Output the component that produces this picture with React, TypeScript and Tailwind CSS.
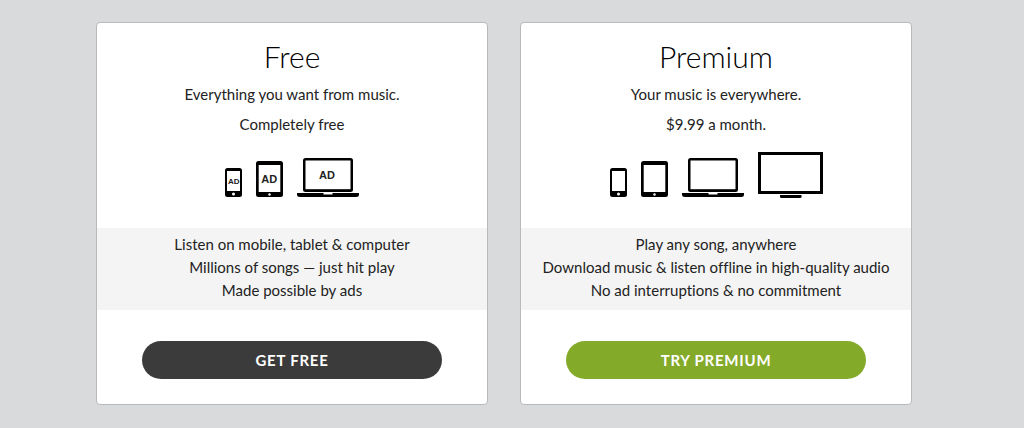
import type { ReactNode } from 'react';

function AdLabel({ x, y, size }: { x: number; y: number; size: number }) {
  return (
    <text
      x={x}
      y={y}
      fontSize={size}
      textAnchor="middle"
      fill="#222222"
      className="font-['Liberation_Sans',sans-serif] font-bold"
    >
      AD
    </text>
  );
}

function Phone({ ad = false }: { ad?: boolean }) {
  return (
    <svg width="17" height="29" viewBox="0 0 17 29" aria-hidden="true">
      <rect width="17" height="29" rx="2.5" fill="#000" />
      <rect x="2" y="3" width="13" height="20" fill="#fff" />
      <circle cx="8.5" cy="26" r="1.5" fill="#fff" />
      {ad && <AdLabel x={8.7} y={15.5} size={8} />}
    </svg>
  );
}

function Tablet({ ad = false }: { ad?: boolean }) {
  return (
    <svg width="27" height="36" viewBox="0 0 27 36" aria-hidden="true">
      <rect width="27" height="36" rx="2.5" fill="#000" />
      <rect x="2.7" y="4" width="21.6" height="27" fill="#fff" />
      <circle cx="13.5" cy="33.5" r="1.2" fill="#fff" />
      {ad && <AdLabel x={13.2} y={22} size={11} />}
    </svg>
  );
}

function Laptop({ ad = false }: { ad?: boolean }) {
  return (
    <svg width="62" height="39" viewBox="0 0 62 39" aria-hidden="true">
      <rect x="6" width="50" height="34" rx="2.5" fill="#000" />
      <rect x="8.5" y="2.5" width="45" height="28.7" fill="#fff" />
      <path d="M0 35h62v1.5q0 2.5-3 2.5H3q-3 0-3-2.5z" fill="#000" />
      <rect x="26.5" y="35" width="9" height="1.5" fill="#fff" />
      {ad && <AdLabel x={30} y={21} size={11} />}
    </svg>
  );
}

function Television() {
  return (
    <svg width="65" height="46" viewBox="0 0 65 46" className="translate-y-px" aria-hidden="true">
      <rect width="65" height="42" fill="#000" />
      <rect x="3" y="3" width="59" height="36" fill="#fff" />
      <path d="M22 43h21.5v2q0 1-1.500 1h-18.500q-1.500 0-1.500-1z" fill="#000" />
    </svg>
  );
}

interface PlanProps {
  name: string;
  tagline: string;
  price: string;
  devices: ReactNode;
  features: string[];
  action: string;
  actionClass: string;
}

function Plan({ name, tagline, price, devices, features, action, actionClass }: PlanProps) {
  return (
    <section className="flex flex-col rounded border border-[#b8b9bb] bg-white pt-4 pb-[25px] text-center text-[15px] text-[#222222]">
      <h2 className="mb-1.5 text-3xl leading-[34px] font-light text-black">{name}</h2>
      <p className="leading-[30px]">{tagline}</p>
      <p className="leading-[30px]">{price}</p>
      <div className="mt-3 flex h-[46px] items-end justify-center gap-3.5">{devices}</div>
      <ul className="mt-[31px] bg-[#f4f4f4] pt-[5px] pb-2 leading-[23px]">
        {features.map((feature) => (
          <li key={feature}>{feature}</li>
        ))}
      </ul>
      <button
        type="button"
        className={`mx-auto mt-[31px] h-[38px] w-full max-w-[300px] cursor-pointer rounded-full text-[15px] font-bold tracking-wider text-white ${actionClass}`}
      >
        {action}
      </button>
    </section>
  );
}

export default function App() {
  return (
    <main className="min-h-screen bg-[#d9dadc] pt-[22px] pr-28 pb-[22px] pl-24 font-[Lato,sans-serif] [font-variant-ligatures:none]">
      <div className="grid grid-cols-2 gap-8">
        <Plan
          name="Free"
          tagline="Everything you want from music."
          price="Completely free"
          devices={
            <>
              <Phone ad />
              <Tablet ad />
              <Laptop ad />
            </>
          }
          features={[
            'Listen on mobile, tablet & computer',
            'Millions of songs — just hit play',
            'Made possible by ads',
          ]}
          action="GET FREE"
          actionClass="bg-[#3b3b3b]"
        />
        <Plan
          name="Premium"
          tagline="Your music is everywhere."
          price="$9.99 a month."
          devices={
            <>
              <Phone />
              <Tablet />
              <Laptop />
              <Television />
            </>
          }
          features={[
            'Play any song, anywhere',
            'Download music & listen offline in high-quality audio',
            'No ad interruptions & no commitment',
          ]}
          action="TRY PREMIUM"
          actionClass="bg-[#84aa2a]"
        />
      </div>
    </main>
  );
}
